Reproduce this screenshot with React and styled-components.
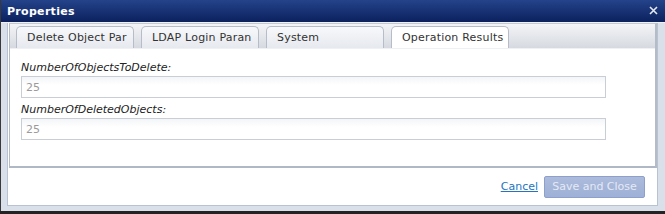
import React from 'react'
import styled, { createGlobalStyle } from 'styled-components'

const GlobalStyle = createGlobalStyle`
  html, body {
    margin: 0;
    padding: 0;
    background: #232323;
  }
  body {
    font-family: "DejaVu Sans", Verdana, sans-serif;
    font-size: 11px;
  }
`

const tabs = ['Delete Object Par', 'LDAP Login Paran', 'System', 'Operation Results']

const fields = [
  { label: 'NumberOfObjectsToDelete:', value: '25' },
  { label: 'NumberOfDeletedObjects:', value: '25' },
]

export default function App() {
  return (
    <>
      <GlobalStyle />
      <Window>
        <TitleBar>
          <Title>Properties</Title>
          <CloseButton>
            <svg width="9" height="9" viewBox="0 0 9 9">
              <path d="M1 1 L8 8 M8 1 L1 8" stroke="#e4e8f0" strokeWidth="1.6" />
            </svg>
          </CloseButton>
        </TitleBar>
        <Frame>
          <Inner>
            <TabPanel>
              <TabStrip>
                {tabs.map((t, i) => (
                  <Tab key={t} active={i === tabs.length - 1}>{t}</Tab>
                ))}
              </TabStrip>
              <TabBody>
                {fields.map((f) => (
                  <Field key={f.label}>
                    <Label>{f.label}</Label>
                    <Input>{f.value}</Input>
                  </Field>
                ))}
              </TabBody>
            </TabPanel>
            <Footer>
              <CancelLink>Cancel</CancelLink>
              <SaveButton>Save and Close</SaveButton>
            </Footer>
          </Inner>
        </Frame>
      </Window>
    </>
  )
}

const Window = styled.div`
  width: 672px;
  height: 211px;
  background: #d9e0ea;
  border-left: 1px solid #3a3a3a;
  box-sizing: border-box;
  display: flex;
  flex-direction: column;
`

const TitleBar = styled.div`
  height: 22px;
  flex: none;
  background: linear-gradient(#24438a, #0c215e);
  display: flex;
  align-items: center;
  justify-content: space-between;
  padding: 0 8px 0 6px;
  width: 665px;
  box-sizing: border-box;
`

const Title = styled.div`
  color: #ffffff;
  font-weight: bold;
  font-size: 11px;
  letter-spacing: 0.3px;
`

const CloseButton = styled.div`
  display: flex;
  align-items: center;
  margin-top: -2px;
`

const Frame = styled.div`
  flex: 1;
  padding: 0 0 5px 6px;
  display: flex;
  border-top: 1px solid #eef1f5;
`

const Inner = styled.div`
  width: 651px;
  background: #ffffff;
  border: 1px solid #b9c2d0;
  border-top: none;
  box-sizing: border-box;
  display: flex;
  flex-direction: column;
`

const TabPanel = styled.div`
  margin-left: 1px;
  border-left: 1px solid #b4bcc8;
  border-right: 2px solid #b4bcc8;
  border-bottom: 2px solid #b0b8c6;
  border-top: 1px solid #c4cad4;
  height: 145px;
  box-sizing: border-box;
  display: flex;
  flex-direction: column;
`

const TabStrip = styled.div`
  height: 24px;
  flex: none;
  background: linear-gradient(#f3f4f7, #d6dae0);
  display: flex;
  align-items: flex-end;
  gap: 7px;
  padding-left: 6px;
  border-bottom: 1px solid #eef0f3;
`

const Tab = styled.div`
  width: 118px;
  height: 22px;
  box-sizing: border-box;
  border: 1px solid #b6bdc8;
  border-bottom: none;
  border-radius: 5px 5px 0 0;
  background: ${(p) => (p.active ? '#ffffff' : 'linear-gradient(#f7f8fa, #e6e9ef)')};
  color: #333;
  padding: 4px 0 0 10px;
  white-space: nowrap;
  overflow: hidden;
  font-size: 11px;
  letter-spacing: 0.2px;
`

const TabBody = styled.div`
  flex: 1;
  padding: 12px 0 0 11px;
  display: flex;
  flex-direction: column;
  gap: 5px;
`

const Field = styled.div`
  display: flex;
  flex-direction: column;
  gap: 1px;
`

const Label = styled.div`
  font-style: italic;
  color: #222;
  font-size: 11px;
  height: 14px;
  line-height: 14px;
`

const Input = styled.div`
  width: 585px;
  height: 22px;
  box-sizing: border-box;
  border: 1px solid #c9cdd6;
  background: linear-gradient(#f3f5f7, #ffffff 40%);
  color: #9a9a9a;
  padding: 4px 0 0 4px;
  font-size: 11px;
`

const Footer = styled.div`
  flex: 1;
  display: flex;
  align-items: center;
  justify-content: flex-end;
  gap: 6px;
  padding: 0 12px 0 0;
`

const CancelLink = styled.a`
  color: #2474bf;
  text-decoration: underline;
  font-size: 11px;
  cursor: pointer;
`

const SaveButton = styled.div`
  width: 101px;
  height: 22px;
  box-sizing: border-box;
  border: 1px solid #8d9fca;
  border-radius: 2px;
  background: linear-gradient(#acbbdc, #9eb0d6);
  color: #e4e9f4;
  display: flex;
  align-items: center;
  justify-content: center;
  font-size: 11px;
`
